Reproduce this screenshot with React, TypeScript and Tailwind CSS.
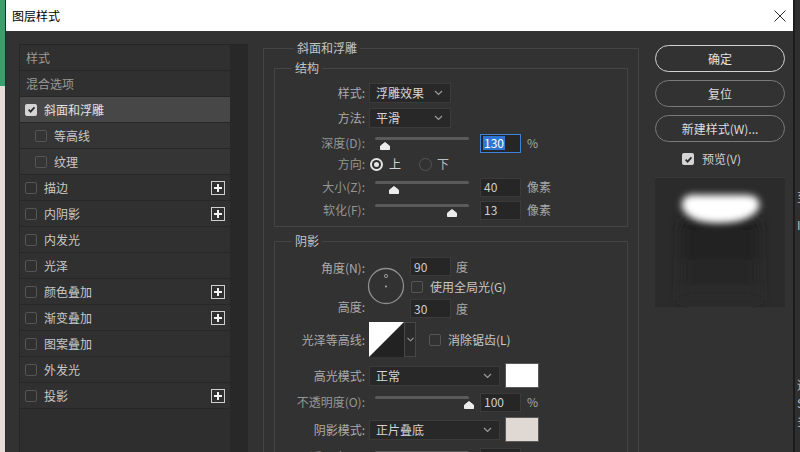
import React from 'react';

const layers = [
  { name: '样式', head: true },
  { name: '混合选项', head: true },
  { name: '斜面和浮雕', checked: true, active: true },
  { name: '等高线', sub: true },
  { name: '纹理', sub: true },
  { name: '描边', plus: true },
  { name: '内阴影', plus: true },
  { name: '内发光' },
  { name: '光泽' },
  { name: '颜色叠加', plus: true },
  { name: '渐变叠加', plus: true },
  { name: '图案叠加' },
  { name: '外发光' },
  { name: '投影', plus: true },
];

function Check({ on }: { on?: boolean }) {
  if (on) {
    return (
      <span className="flex h-[12px] w-[12px] shrink-0 items-center justify-center rounded-[2px] bg-[#d4d4d4]">
        <svg viewBox="0 0 10 10" className="h-[9px] w-[9px]">
          <path d="M1.8 5.2l2.2 2.2 4.3-4.8" stroke="#2a2a2a" strokeWidth="1.9" fill="none" />
        </svg>
      </span>
    );
  }
  return <span className="block h-[12px] w-[12px] shrink-0 rounded-[2px] border border-[#555555]" />;
}

function Plus() {
  return (
    <span className="flex h-[14px] w-[14px] items-center justify-center border border-[#cfcfcf]">
      <svg viewBox="0 0 10 10" className="h-[10px] w-[10px]">
        <path d="M5 1v8M1 5h8" stroke="#f2f2f2" strokeWidth="2" />
      </svg>
    </span>
  );
}

function Chevron() {
  return (
    <svg width="9" height="6" viewBox="0 0 9 6" className="shrink-0">
      <path d="M1 1l3.5 3.5L8 1" stroke="#9c9c9c" strokeWidth="1.2" fill="none" />
    </svg>
  );
}

function Select({ value, wide }: { value: string; wide?: boolean }) {
  return (
    <div
      className={
        'ml-[4px] flex h-[20px] items-center justify-between border border-[#3b3b3b] bg-[#282828] pl-[6px] pr-[7px] text-[#d4d4d4] ' +
        (wide ? 'w-[131px]' : 'w-[82px]')
      }
    >
      <span>{value}</span>
      <Chevron />
    </div>
  );
}

function Field({ value, focus }: { value: string; focus?: boolean }) {
  if (focus) {
    return (
      <div className="flex h-[19px] w-[41px] items-center border border-[#3f82d8] bg-[#262626] pl-[2px]">
        <span className="bg-[#2f76d2] px-[1px] leading-[14px] text-white">{value}</span>
      </div>
    );
  }
  return (
    <div className="flex h-[19px] w-[41px] items-center border border-[#3b3b3b] bg-[#262626] pl-[3px] text-[#cfcfcf]">
      {value}
    </div>
  );
}

function Slider({ pos }: { pos: number }) {
  return (
    <div className="relative ml-[10px] h-[18px] w-[94px] self-start">
      <div className="absolute left-0 right-0 top-[3px] h-[3px] rounded-full bg-[#5a5a5a]" />
      <svg className="absolute top-[8px]" style={{ left: pos - 5 }} width="10" height="8" viewBox="0 0 10 8">
        <path d="M5 0.5 L9.5 4 V7.5 H0.5 V4 Z" fill="#ececec" stroke="#ececec" strokeWidth="1" strokeLinejoin="round" />
      </svg>
    </div>
  );
}

function Label({ text, dim }: { text: string; dim?: boolean }) {
  return (
    <span className={'w-[90px] shrink-0 text-right ' + (dim ? 'text-[#959595]' : 'text-[#ababab]')}>{text}</span>
  );
}

function SliderRow({ label, pos, value, unit, focus, cls }: { label: string; pos: number; value: string; unit: string; focus?: boolean; cls: string }) {
  return (
    <div className={'flex h-[20px] items-center ' + cls}>
      <Label text={label} dim />
      <div className="flex h-[20px] items-start pt-[1px]">
        <Slider pos={pos} />
      </div>
      <div className="ml-[11px]">
        <Field value={value} focus={focus} />
      </div>
      <span className="ml-[6px] text-[#a8a8a8]">{unit}</span>
    </div>
  );
}

function Swatch({ color }: { color: string }) {
  return <div className={'ml-[5px] h-[25px] w-[34px] border border-[#5a5a5a] ' + color} />;
}

export default function App() {
  return (
    <div className="flex h-[452px] w-[800px] overflow-hidden bg-[#2d2d2d] font-['Noto_Sans_CJK_SC',sans-serif] text-[12px] leading-[14px]">
      {/* background app edge */}
      <div className="flex w-[5px] flex-col">
        <div className="h-[86px] bg-[#3f9d6d]" />
        <div className="flex-1 bg-[#e7ddd6]" />
      </div>

      <div className="flex w-[788px] flex-col border-l border-[#2a2a2a]">
        <div className="flex h-[31px] shrink-0 items-center justify-between bg-white pl-[6px] pr-[7px]">
          <span className="text-[12px] text-black">图层样式</span>
          <svg width="12" height="12" viewBox="0 0 12 12">
            <path d="M0.5 0.5l11 11M11.5 0.5l-11 11" stroke="#2b2b2b" strokeWidth="1" />
          </svg>
        </div>

        <div className="flex flex-1 overflow-hidden bg-[#323232] pl-[13px]">
          {/* left list */}
          <div className="mt-[13px] flex w-[229px] shrink-0 border-t border-[#262626]">
            <div className="w-[211px] border-l border-[#262626] bg-[#2e2e2e]">
              {layers.map((l) => (
                <div
                  key={l.name}
                  className={
                    'flex h-[26px] items-center border-b border-[#272727] pr-[5px] ' +
                    (l.active ? 'bg-[#474747] ' : l.sub ? 'bg-[#353535] ' : 'bg-[#303030] ') +
                    (l.head ? 'pl-[6px] text-[#9a9a9a]' : l.sub ? 'pl-[15px] text-[#c8c8c8]' : 'pl-[5px] text-[#c8c8c8]')
                  }
                >
                  {!l.head && <Check on={l.checked} />}
                  <span className={(l.head ? '' : 'ml-[7px] ') + (l.active ? 'text-[#e2e2e2]' : '')}>{l.name}</span>
                  {l.plus && (
                    <span className="ml-auto">
                      <Plus />
                    </span>
                  )}
                </div>
              ))}
            </div>
            <div className="w-[18px] bg-[#282828]" />
          </div>

          {/* middle settings */}
          <div className="ml-[15px] mt-[10px] w-[376px] shrink-0">
            <fieldset className="h-[440px] border border-[#444444] px-[10px]">
              <legend className="ml-[20px] px-[3px] text-[#c4c4c4]">斜面和浮雕</legend>

              <fieldset className="mt-[6px] border border-[#444444] pb-[6px]">
                <legend className="ml-[17px] px-[3px] text-[#c4c4c4]">结构</legend>
                <div className="mt-[8px] flex h-[20px] items-center">
                  <Label text="样式:" />
                  <Select value="浮雕效果" />
                </div>
                <div className="mt-[5px] flex h-[20px] items-center">
                  <Label text="方法:" />
                  <Select value="平滑" />
                </div>
                <SliderRow cls="mt-[5px]" label="深度(D):" pos={10} value="130" unit="%" focus />
                <div className="mt-[1px] flex h-[20px] items-center">
                  <Label text="方向:" dim />
                  <span className="ml-[5px] flex h-[13px] w-[13px] items-center justify-center rounded-full bg-[#e4e4e4]">
                    <span className="flex h-[9px] w-[9px] items-center justify-center rounded-full bg-[#2e2e2e]">
                      <span className="h-[5px] w-[5px] rounded-full bg-[#e4e4e4]" />
                    </span>
                  </span>
                  <span className="ml-[6px] text-[#d2d2d2]">上</span>
                  <span className="ml-[18px] h-[13px] w-[13px] rounded-full border border-[#555555]" />
                  <span className="ml-[5px] text-[#bdbdbd]">下</span>
                </div>
                <SliderRow cls="mt-[3px]" label="大小(Z):" pos={19} value="40" unit="像素" />
                <SliderRow cls="mt-[3px]" label="软化(F):" pos={77} value="13" unit="像素" />
              </fieldset>

              <fieldset className="mt-[7px] h-[240px] border border-[#444444]">
                <legend className="ml-[17px] px-[3px] text-[#c4c4c4]">阴影</legend>

                <div className="mt-[9px] flex">
                  <div className="flex w-[90px] shrink-0 flex-col items-end text-[#ababab]">
                    <span className="mt-[4px]">角度(N):</span>
                    <span className="mt-[25px]">高度:</span>
                  </div>
                  <svg className="ml-[2px] mt-[10px]" width="38" height="38" viewBox="0 0 38 38">
                    <circle cx="19" cy="19" r="17.5" stroke="#8e8e8e" strokeWidth="1.3" fill="none" />
                    <circle cx="19" cy="9" r="1.6" stroke="#9a9a9a" strokeWidth="1" fill="none" />
                    <circle cx="19" cy="19.5" r="1" fill="#b0b0b0" />
                  </svg>
                  <div className="ml-[5px] flex flex-col">
                    <div className="flex items-center">
                      <Field value="90" />
                      <span className="ml-[5px] text-[#a8a8a8]">度</span>
                    </div>
                    <div className="mt-[4px] flex h-[14px] items-center pl-[1px]">
                      <Check />
                      <span className="ml-[7px] text-[#c6c6c6]">使用全局光(G)</span>
                    </div>
                    <div className="mt-[5px] flex items-center">
                      <Field value="30" />
                      <span className="ml-[5px] text-[#a8a8a8]">度</span>
                    </div>
                  </div>
                </div>

                <div className="mt-[4px] flex h-[35px] items-center">
                  <Label text="光泽等高线:" />
                  <svg className="ml-[4px]" width="35" height="35" viewBox="0 0 35 35">
                    <rect width="35" height="35" fill="#222222" />
                    <path d="M0 0 H35 L0 35 Z" fill="#ffffff" />
                  </svg>
                  <div className="flex h-[35px] w-[12px] items-center justify-center border border-[#474747] bg-[#2b2b2b]">
                    <svg width="7" height="5" viewBox="0 0 7 5">
                      <path d="M0.5 0.8l3 3 3-3" stroke="#9c9c9c" strokeWidth="1.1" fill="none" />
                    </svg>
                  </div>
                  <span className="ml-[13px] flex">
                    <Check />
                  </span>
                  <span className="ml-[7px] text-[#c6c6c6]">消除锯齿(L)</span>
                </div>

                <div className="mt-[6px] flex h-[25px] items-center">
                  <Label text="高光模式:" />
                  <Select value="正常" wide />
                  <Swatch color="bg-white" />
                </div>

                <SliderRow cls="mt-[4px]" label="不透明度(O):" pos={94} value="100" unit="%" />

                <div className="mt-[5px] flex h-[25px] items-center">
                  <Label text="阴影模式:" />
                  <Select value="正片叠底" wide />
                  <Swatch color="bg-[#e0d8d2]" />
                </div>

                <SliderRow cls="mt-[5px]" label="不透明度(C):" pos={44} value="50" unit="%" />
              </fieldset>
            </fieldset>
          </div>

          {/* right buttons */}
          <div className="ml-[16px] mt-[14px] flex w-[130px] shrink-0 flex-col">
            <button className="h-[27px] rounded-full border-[1.5px] border-[#d2d2d2] text-[#e2e2e2]">确定</button>
            <button className="mt-[8px] h-[27px] rounded-full border-[1.5px] border-[#7a7a7a] text-[#dcdcdc]">复位</button>
            <button className="mt-[8px] h-[27px] rounded-full border-[1.5px] border-[#7a7a7a] text-[#dcdcdc]">新建样式(W)...</button>
            <div className="mt-[11px] flex h-[12px] items-center pl-[27px]">
              <Check on />
              <span className="ml-[8px] text-[#d0d0d0]">预览(V)</span>
            </div>
            <div className="mt-[12px] h-[130px] border-t border-[#3a3a3a] bg-[#2b2b2b]">
              <svg width="130" height="130" viewBox="0 0 130 130">
                <defs>
                  <filter id="soft" x="-30%" y="-60%" width="160%" height="220%">
                    <feGaussianBlur stdDeviation="3.5" />
                  </filter>
                  <filter id="softer" x="-30%" y="-30%" width="160%" height="160%">
                    <feGaussianBlur stdDeviation="6" />
                  </filter>
                  <linearGradient id="fade" x1="0" y1="0" x2="0" y2="1">
                    <stop offset="0" stopColor="#1e1e1e" />
                    <stop offset="1" stopColor="#2b2b2b" />
                  </linearGradient>
                </defs>
                <rect x="26" y="40" width="78" height="82" fill="url(#fade)" filter="url(#softer)" />
                <path d="M28 22 Q30 16 45 17 H88 Q102 16 104 24 Q106 32 96 38 Q86 45 65 45 Q42 45 34 38 Q24 31 28 22 Z" fill="#ffffff" filter="url(#soft)" />
              </svg>
            </div>
          </div>
        </div>
      </div>

      {/* window behind */}
      <div className="flex w-[7px] flex-col overflow-hidden border-l-2 border-[#1c1c1c] bg-[#2f2f2f] pl-[2px] text-[#bdbdbd]">
        <span className="mt-[190px] whitespace-nowrap">至</span>
        <span className="mt-[14px] whitespace-nowrap">I</span>
        <span className="mt-[146px] whitespace-nowrap">适</span>
        <span className="mt-[4px] whitespace-nowrap">S</span>
        <span className="mt-[4px] whitespace-nowrap">多</span>
      </div>
    </div>
  );
}
